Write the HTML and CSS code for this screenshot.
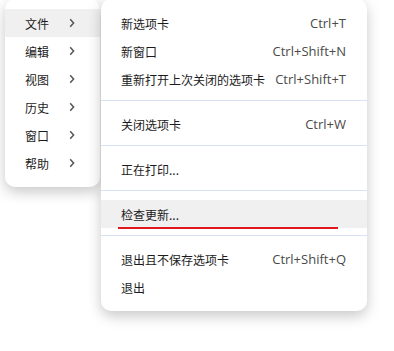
FILE: index.html
```html
<!DOCTYPE html>
<html lang="zh-CN">
<head>
<meta charset="utf-8">
<link rel="stylesheet" href="styles.css">
</head>
<body>
<div class="stage">
  <div class="menu main">
    <div class="mrow active"><span>文件</span><svg class="chev" viewBox="0 0 6 10" width="6" height="10"><path d="M1.2 1.2 L4.6 5 L1.2 8.8" fill="none" stroke="#555" stroke-width="1.5"/></svg></div>
    <div class="mrow"><span>编辑</span><svg class="chev" viewBox="0 0 6 10" width="6" height="10"><path d="M1.2 1.2 L4.6 5 L1.2 8.8" fill="none" stroke="#555" stroke-width="1.5"/></svg></div>
    <div class="mrow"><span>视图</span><svg class="chev" viewBox="0 0 6 10" width="6" height="10"><path d="M1.2 1.2 L4.6 5 L1.2 8.8" fill="none" stroke="#555" stroke-width="1.5"/></svg></div>
    <div class="mrow"><span>历史</span><svg class="chev" viewBox="0 0 6 10" width="6" height="10"><path d="M1.2 1.2 L4.6 5 L1.2 8.8" fill="none" stroke="#555" stroke-width="1.5"/></svg></div>
    <div class="mrow"><span>窗口</span><svg class="chev" viewBox="0 0 6 10" width="6" height="10"><path d="M1.2 1.2 L4.6 5 L1.2 8.8" fill="none" stroke="#555" stroke-width="1.5"/></svg></div>
    <div class="mrow"><span>帮助</span><svg class="chev" viewBox="0 0 6 10" width="6" height="10"><path d="M1.2 1.2 L4.6 5 L1.2 8.8" fill="none" stroke="#555" stroke-width="1.5"/></svg></div>
  </div>
  <div class="menu sub">
    <div class="item"><span>新选项卡</span><span class="key">Ctrl+T</span></div>
    <div class="item"><span>新窗口</span><span class="key">Ctrl+Shift+N</span></div>
    <div class="item"><span>重新打开上次关闭的选项卡</span><span class="key">Ctrl+Shift+T</span></div>
    <div class="sep"></div>
    <div class="item"><span>关闭选项卡</span><span class="key">Ctrl+W</span></div>
    <div class="sep"></div>
    <div class="item"><span>正在打印...</span></div>
    <div class="sep"></div>
    <div class="item active marked"><span>检查更新...</span></div>
    <div class="sep"></div>
    <div class="item"><span>退出且不保存选项卡</span><span class="key">Ctrl+Shift+Q</span></div>
    <div class="item"><span>退出</span></div>
  </div>
</div>
</body>
</html>
```

FILE: styles.css
```css
html, body {
  margin: 0;
  padding: 0;
  background: #ffffff;
}

body {
  font-family: "Noto Sans CJK SC", "Noto Sans", sans-serif;
  font-size: 12px;
  color: #1b1b1b;
  width: 394px;
  height: 351px;
  overflow: hidden;
}

.stage {
  display: flex;
  align-items: flex-start;
  margin-top: -1px;
  padding-left: 5px;
}

.menu {
  background: #ffffff;
  border-radius: 10px;
  padding: 10px 0;
  box-shadow: 0 5px 14px rgba(0, 0, 0, 0.22);
}

.main {
  width: 95px;
  position: relative;
  z-index: 1;
}

.sub {
  width: 266px;
  margin-left: 1px;
  position: relative;
  z-index: 2;
}

.mrow {
  height: 28px;
  display: flex;
  align-items: center;
  justify-content: space-between;
  padding: 0 25px 0 20px;
}

.mrow.active,
.item.active {
  background: #f0f0f0;
}

.chev {
  display: block;
}

.item {
  height: 28px;
  display: flex;
  align-items: center;
  justify-content: space-between;
  padding: 0 21px 0 20px;
  position: relative;
}

.key {
  font-family: "Open Sans", "Noto Sans", sans-serif;
  font-size: 13px;
  color: #4a4a4a;
}

.sep {
  height: 1px;
  background: #d6e2f6;
  margin: 7px 0 9px;
}

.marked::after {
  content: "";
  position: absolute;
  left: 17px;
  width: 220px;
  bottom: -1px;
  height: 2px;
  background: #e0171c;
}
```
